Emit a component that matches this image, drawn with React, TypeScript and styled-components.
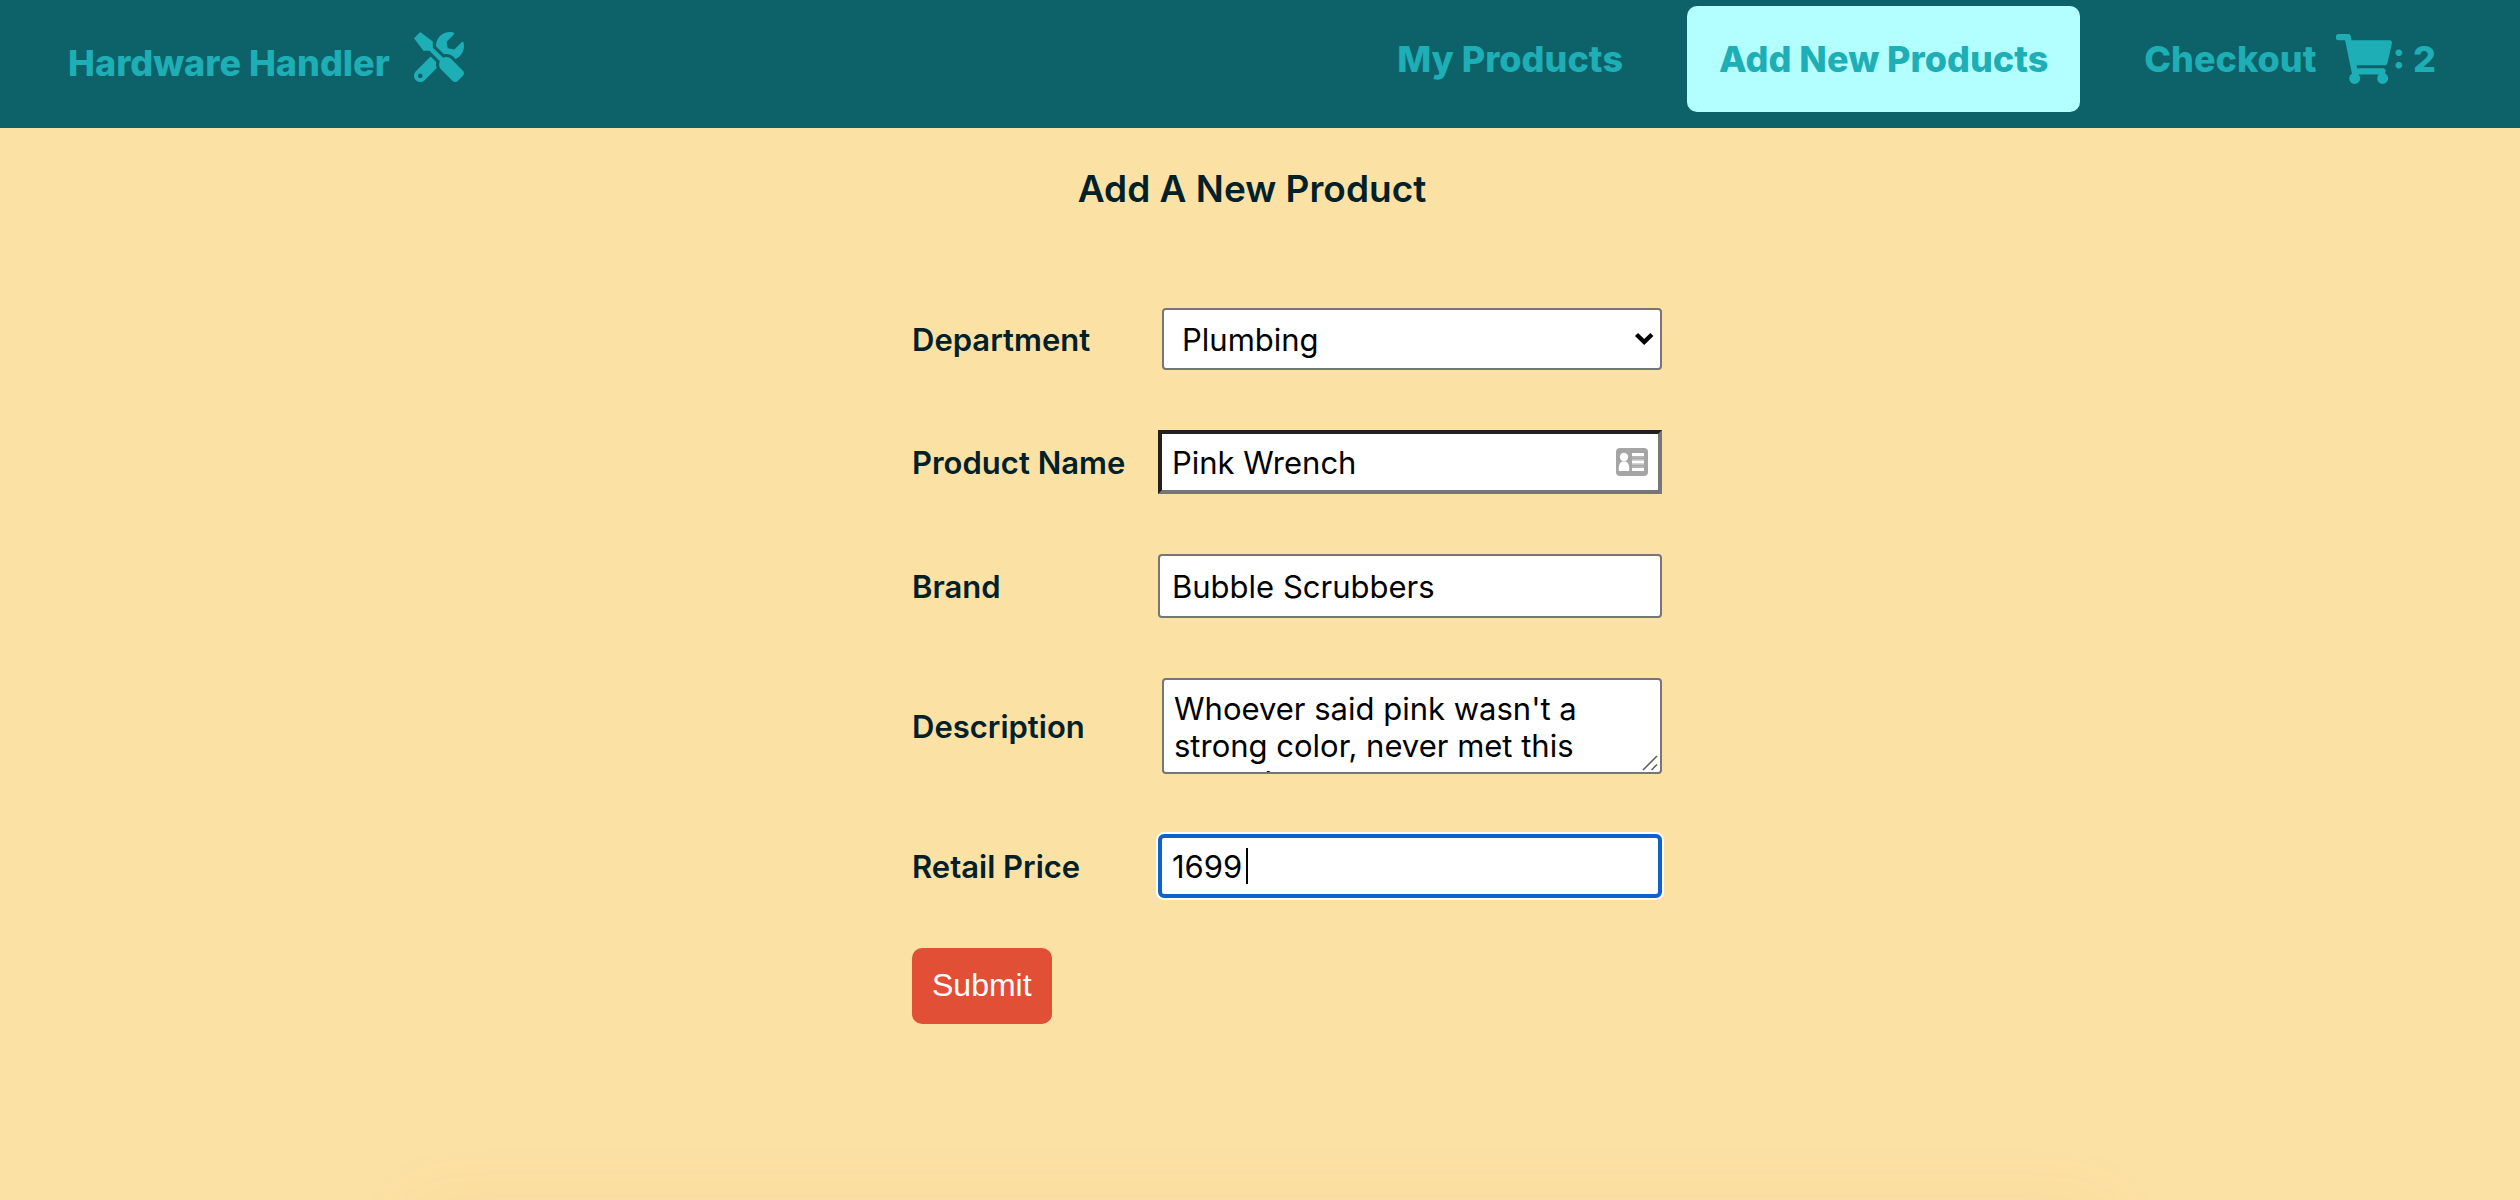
import React from "react";
import styled, { createGlobalStyle, css } from "styled-components";
import { FaTools, FaShoppingCart } from "react-icons/fa";

const color = {
  header: "#0c6268",
  accent: "#1eaeb5",
  active: "#b3ffff",
  page: "#fce1a4",
  ink: "#01212a",
  border: "#767676",
  submit: "#e15036",
  focus: "#0f62cb",
};

const GlobalStyle = createGlobalStyle`
  *, *::before, *::after {
    box-sizing: border-box;
  }
  body {
    margin: 0;
    background: ${color.page};
    color: ${color.ink};
    font-family: Inter, "Liberation Sans", sans-serif;
    font-size: 31px;
  }
`;

const Page = styled.div`
  display: flex;
  flex-direction: column;
  min-height: 100vh;
  overflow: hidden;
`;

const Header = styled.header`
  display: flex;
  justify-content: space-between;
  align-items: flex-start;
  padding: 6px 52px 16px 68px;
  background: ${color.header};
  color: ${color.accent};
  font-size: 36px;
  font-weight: 800;
  line-height: 44px;
`;

const Brand = styled.a`
  display: flex;
  gap: 24px;
  padding-top: 26px;
  color: inherit;
  text-decoration: none;
`;

const BrandName = styled.span`
  padding-top: 9px;
`;

const ToolsIcon = styled(FaTools)`
  width: 50px;
  height: 50px;
`;

const CartIcon = styled(FaShoppingCart)`
  width: 56px;
  height: 50px;
  margin-left: 20px;
`;

const Nav = styled.nav`
  display: flex;
  gap: 32px;
`;

const NavLink = styled.a<{ $active?: boolean }>`
  display: flex;
  align-items: center;
  height: 106px;
  padding: 0 32px;
  border-radius: 10px;
  background: ${(p) => (p.$active ? color.active : "transparent")};
  color: inherit;
  text-decoration: none;
  white-space: pre;
`;

const Main = styled.main`
  flex: 1;
  display: flex;
  flex-direction: column;
  align-items: center;
  padding-top: 38px;
`;

const Title = styled.h1`
  margin: 0;
  padding-right: 16px;
  font-size: 37px;
  font-weight: 600;
  line-height: 46px;
`;

const Form = styled.form`
  width: 804px;
  max-width: 100%;
  margin-top: 96px;
  padding-left: 54px;
`;

const Field = styled.div`
  display: flex;
  align-items: center;
  justify-content: space-between;
  margin-bottom: 60px;
`;

const Label = styled.label`
  font-weight: 600;
`;

const Control = styled.div<{ $narrow?: boolean }>`
  position: relative;
  display: flex;
  width: ${(p) => (p.$narrow ? 500 : 504)}px;
`;

const controlStyle = css`
  width: 100%;
  margin: 0;
  border: 2px solid ${color.border};
  border-radius: 4px;
  background: #fff;
  color: #000;
  font: inherit;
  outline: none;
`;

const Select = styled.select`
  ${controlStyle}
  appearance: none;
  height: 62px;
  padding: 0 48px 0 18px;
`;

const Input = styled.input<{ $kind?: "inset" | "focused" }>`
  ${controlStyle}
  height: 64px;
  padding: 0 12px;
  ${(p) =>
    p.$kind === "inset" &&
    css`
      padding: 0 48px 0 10px;
      border: 4px solid ${color.border};
      border-color: #212121 ${color.border} ${color.border} #212121;
      border-radius: 0;
    `}
  ${(p) =>
    p.$kind === "focused" &&
    css`
      padding: 0 10px;
      border: 4px solid ${color.focus};
      border-radius: 6px;
      box-shadow: 0 0 0 2px #fff;
      caret-color: transparent;
    `}
`;

const TextArea = styled.textarea`
  ${controlStyle}
  height: 96px;
  padding: 10px;
  line-height: 37px;
  overflow: hidden;
  resize: none;
`;

const Adornment = styled.svg<{ $right: number; $bottom: number }>`
  position: absolute;
  right: ${(p) => p.$right}px;
  bottom: ${(p) => p.$bottom}px;
  pointer-events: none;
`;

const Caret = styled.span`
  position: absolute;
  left: 88px;
  top: 14px;
  width: 2px;
  height: 36px;
  background: #000;
`;

const Submit = styled.button`
  display: block;
  height: 76px;
  margin-top: -10px;
  padding: 0 20px 2px;
  border: 0;
  border-radius: 10px;
  background: ${color.submit};
  color: #fff;
  font: 32px "Liberation Sans", Arial, sans-serif;
`;

const BottomShade = styled.div`
  height: 0;
  margin: 0 420px;
  box-shadow: 0 24px 70px 12px rgba(150, 150, 40, 0.12);
`;

export default function App() {
  return (
    <>
      <GlobalStyle />
      <Page>
        <Header>
          <Brand href="#">
            <BrandName>Hardware Handler</BrandName>
            <ToolsIcon aria-hidden />
          </Brand>
          <Nav>
            <NavLink href="#products">My Products</NavLink>
            <NavLink href="#new" $active aria-current="page">
              Add New Products
            </NavLink>
            <NavLink href="#checkout">
              <span>Checkout</span>
              <CartIcon aria-hidden />
              <span>: 2</span>
            </NavLink>
          </Nav>
        </Header>
        <Main>
          <Title>Add A New Product</Title>
          <Form onSubmit={(e) => e.preventDefault()}>
            <Field>
              <Label htmlFor="department">Department</Label>
              <Control $narrow>
                <Select id="department" defaultValue="Plumbing">
                  <option>Plumbing</option>
                </Select>
                <Adornment $right={8} $bottom={24} width="20" height="14" viewBox="0 0 20 14">
                  <path d="M2.5 2.5 L10.2 10 L17.9 2.5" fill="none" stroke="#000" strokeWidth="4.4" />
                </Adornment>
              </Control>
            </Field>
            <Field>
              <Label htmlFor="name">Product Name</Label>
              <Control>
                <Input id="name" type="text" defaultValue="Pink Wrench" $kind="inset" />
                <Adornment $right={14} $bottom={18} width="32" height="28" viewBox="0 0 32 28">
                  <rect width="32" height="28" rx="4" fill="#a5a5a5" />
                  <circle cx="8" cy="9" r="4.2" fill="#fff" />
                  <path d="M2.8 23 V19.5 Q3.2 15 6 13.6 H10 Q12.8 15 13.2 19.5 V23 Z" fill="#fff" />
                  <path d="M16 6.5 H28 M16 14 H28 M16 21.5 H28" stroke="#fff" strokeWidth="3" />
                  <path d="M16 9 H28 M16 16.5 H28 M16 19 H28 M16 11.5 H28" stroke="#c4c4c4" strokeWidth="1" />
                </Adornment>
              </Control>
            </Field>
            <Field>
              <Label htmlFor="brand">Brand</Label>
              <Control>
                <Input id="brand" type="text" defaultValue="Bubble Scrubbers" />
              </Control>
            </Field>
            <Field>
              <Label htmlFor="description">Description</Label>
              <Control $narrow>
                <TextArea
                  id="description"
                  defaultValue="Whoever said pink wasn't a strong color, never met this wrench."
                />
                <Adornment $right={4} $bottom={3} width="16" height="16" viewBox="0 0 16 16">
                  <path d="M1 15 L15 1 M9.5 15 L15 9.5" stroke="#5c5c5c" strokeWidth="1.5" />
                </Adornment>
              </Control>
            </Field>
            <Field>
              <Label htmlFor="price">Retail Price</Label>
              <Control>
                <Input id="price" type="text" inputMode="numeric" defaultValue="1699" $kind="focused" />
                <Caret />
              </Control>
            </Field>
            <Submit type="submit">Submit</Submit>
          </Form>
        </Main>
        <BottomShade />
      </Page>
    </>
  );
}
